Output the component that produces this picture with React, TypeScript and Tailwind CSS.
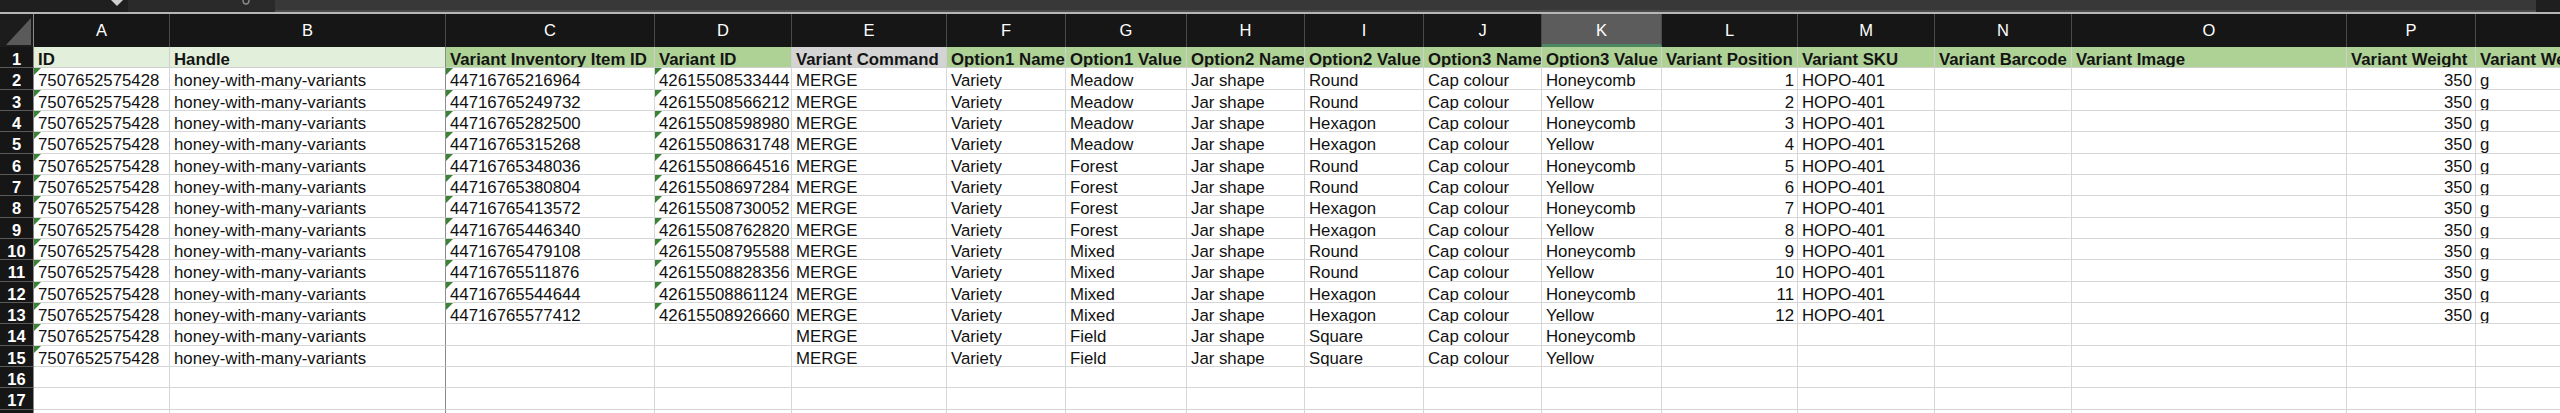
import React from "react";

const COLS =
  "grid grid-cols-[34px_136px_276px_209px_137px_155px_119px_121px_118px_119px_118px_120px_136px_137px_137px_275px_129px_200px]";

const LETTERS = ["A", "B", "C", "D", "E", "F", "G", "H", "I", "J", "K", "L", "M", "N", "O", "P", "Q"];

const HEADERS = [
  "ID",
  "Handle",
  "Variant Inventory Item ID",
  "Variant ID",
  "Variant Command",
  "Option1 Name",
  "Option1 Value",
  "Option2 Name",
  "Option2 Value",
  "Option3 Name",
  "Option3 Value",
  "Variant Position",
  "Variant SKU",
  "Variant Barcode",
  "Variant Image",
  "Variant Weight",
  "Variant Weight Unit",
];

const INV = [
  "44716765216964",
  "44716765249732",
  "44716765282500",
  "44716765315268",
  "44716765348036",
  "44716765380804",
  "44716765413572",
  "44716765446340",
  "44716765479108",
  "44716765511876",
  "44716765544644",
  "44716765577412",
];

const VID = [
  "42615508533444",
  "42615508566212",
  "42615508598980",
  "42615508631748",
  "42615508664516",
  "42615508697284",
  "42615508730052",
  "42615508762820",
  "42615508795588",
  "42615508828356",
  "42615508861124",
  "42615508926660",
];

const OPT1 = ["Meadow", "Meadow", "Meadow", "Meadow", "Forest", "Forest", "Forest", "Forest", "Mixed", "Mixed", "Mixed", "Mixed", "Field", "Field"];
const OPT2 = ["Round", "Round", "Hexagon", "Hexagon", "Round", "Round", "Hexagon", "Hexagon", "Round", "Round", "Hexagon", "Hexagon", "Square", "Square"];
const OPT3 = ["Honeycomb", "Yellow", "Honeycomb", "Yellow", "Honeycomb", "Yellow", "Honeycomb", "Yellow", "Honeycomb", "Yellow", "Honeycomb", "Yellow", "Honeycomb", "Yellow"];

type CellData = { text?: string; right?: boolean; tri?: boolean };

function buildRow(i: number): CellData[] {
  const has = i < 12;
  return [
    { text: "7507652575428", tri: true },
    { text: "honey-with-many-variants" },
    { text: has ? INV[i] : "", tri: has },
    { text: has ? VID[i] : "", tri: has },
    { text: "MERGE" },
    { text: "Variety" },
    { text: OPT1[i] },
    { text: "Jar shape" },
    { text: OPT2[i] },
    { text: "Cap colour" },
    { text: OPT3[i] },
    { text: has ? String(i + 1) : "", right: true },
    { text: has ? "HOPO-401" : "" },
    { text: "" },
    { text: "" },
    { text: has ? "350" : "", right: true },
    { text: has ? "g" : "" },
  ];
}

function RowNum({ n }: { n?: number }) {
  return (
    <div className="flex items-start justify-center overflow-hidden border-b border-r border-b-[#5a5a5a] border-r-[#8a8a8a] bg-[#161616] pt-[2px] text-[16.5px] font-bold leading-[20px] text-white">
      {n}
    </div>
  );
}

function DataCell({ c, col }: { c: CellData; col: number }) {
  return (
    <div
      className={
        "relative overflow-hidden whitespace-nowrap border-b border-r border-b-[#d6d6d6] pl-[4px] pr-[3px] pt-[2px] text-[16.8px] leading-[21px] text-[#111] " +
        (col === 1 ? "border-r-[#8c8c8c] " : "border-r-[#d6d6d6] ") +
        (c.right ? "text-right" : "text-left")
      }
    >
      {c.tri && (
        <span className="absolute left-0 top-0 h-0 w-0 border-r-[7px] border-t-[7px] border-r-transparent border-t-[#3a8236]" />
      )}
      {c.text}
    </div>
  );
}

function headerBg(col: number) {
  if (col <= 1) return "bg-[#e2efda]";
  if (col === 4) return "bg-[#d4d4d4]";
  return "bg-[#aed196]";
}

export default function App() {
  const rows = Array.from({ length: 14 }, (_, i) => buildRow(i));
  return (
    <div className="h-[413px] w-[2560px] overflow-hidden bg-white font-['Liberation_Sans',Arial,sans-serif]">
      {/* top strip */}
      <div className="flex h-[12px] bg-[#1f1f1f]">
        <div className="flex w-[128px] items-start justify-end pr-[4px]">
          <svg width="14" height="7" viewBox="0 0 14 7">
            <polygon points="1,0 13,0 7,6" fill="#cfcfcf" />
          </svg>
        </div>
        <div className="flex w-[147px] items-start justify-end bg-[#2a2a2a] pr-[24px]">
          <svg width="10" height="5" viewBox="0 0 10 5">
            <path d="M2 0 Q2 4 5 4 Q8 4 8 0" stroke="#8a8a8a" strokeWidth="1.5" fill="none" />
          </svg>
        </div>
        <div className="flex-1 border-b-[2px] border-b-[#4a4a4a] bg-[#383838]" />
        <div className="w-[24px] bg-[#1f1f1f]" />
      </div>
      <div className="h-[2px] bg-[#b6b6b6]" />

      {/* column letters */}
      <div className={COLS + " h-[33px] bg-[#161616]"}>
        <div className="border-r border-r-[#8a8a8a] bg-[#1c1c1c]">
          <svg width="33" height="33" viewBox="0 0 33 33">
            <polygon points="31,4 31,31 6,31" fill="#5a5a5a" />
          </svg>
        </div>
        {LETTERS.map((l, i) =>
          i === 10 ? (
            <div
              key={l}
              className="flex items-center justify-center border-b-[3px] border-r border-b-[#4d8762] border-r-[#4a4a4a] bg-[#5c5c5c] pt-[3px] text-[16.5px] text-white"
            >
              {l}
            </div>
          ) : (
            <div key={l} className="flex items-center justify-center border-r border-r-[#4a4a4a] text-[16.5px] text-white">
              {l}
            </div>
          )
        )}
      </div>

      {/* row 1: headers */}
      <div className={COLS + " h-[21.33px]"}>
        <RowNum n={1} />
        {HEADERS.map((h, i) => (
          <div
            key={h}
            className={
              "overflow-hidden whitespace-nowrap border-b border-r border-b-[#cfcfcf] pl-[4px] pt-[2px] text-[16.8px] font-bold leading-[21px] text-[#141414] " +
              (i === 1 ? "border-r-[#8c8c8c] " : "border-r-[#cfcfcf] ") +
              headerBg(i)
            }
          >
            {h}
          </div>
        ))}
      </div>

      {/* data rows */}
      {rows.map((r, ri) => (
        <div key={ri} className={COLS + " h-[21.33px]"}>
          <RowNum n={ri + 2} />
          {r.map((c, ci) => (
            <DataCell key={ci} c={c} col={ci} />
          ))}
        </div>
      ))}

      {/* empty rows */}
      {[16, 17, 0].map((n) => (
        <div key={n} className={COLS + " h-[21.33px]"}>
          <RowNum n={n || undefined} />
          {LETTERS.map((l, ci) => (
            <DataCell key={l} c={{ text: "" }} col={ci} />
          ))}
        </div>
      ))}
    </div>
  );
}
